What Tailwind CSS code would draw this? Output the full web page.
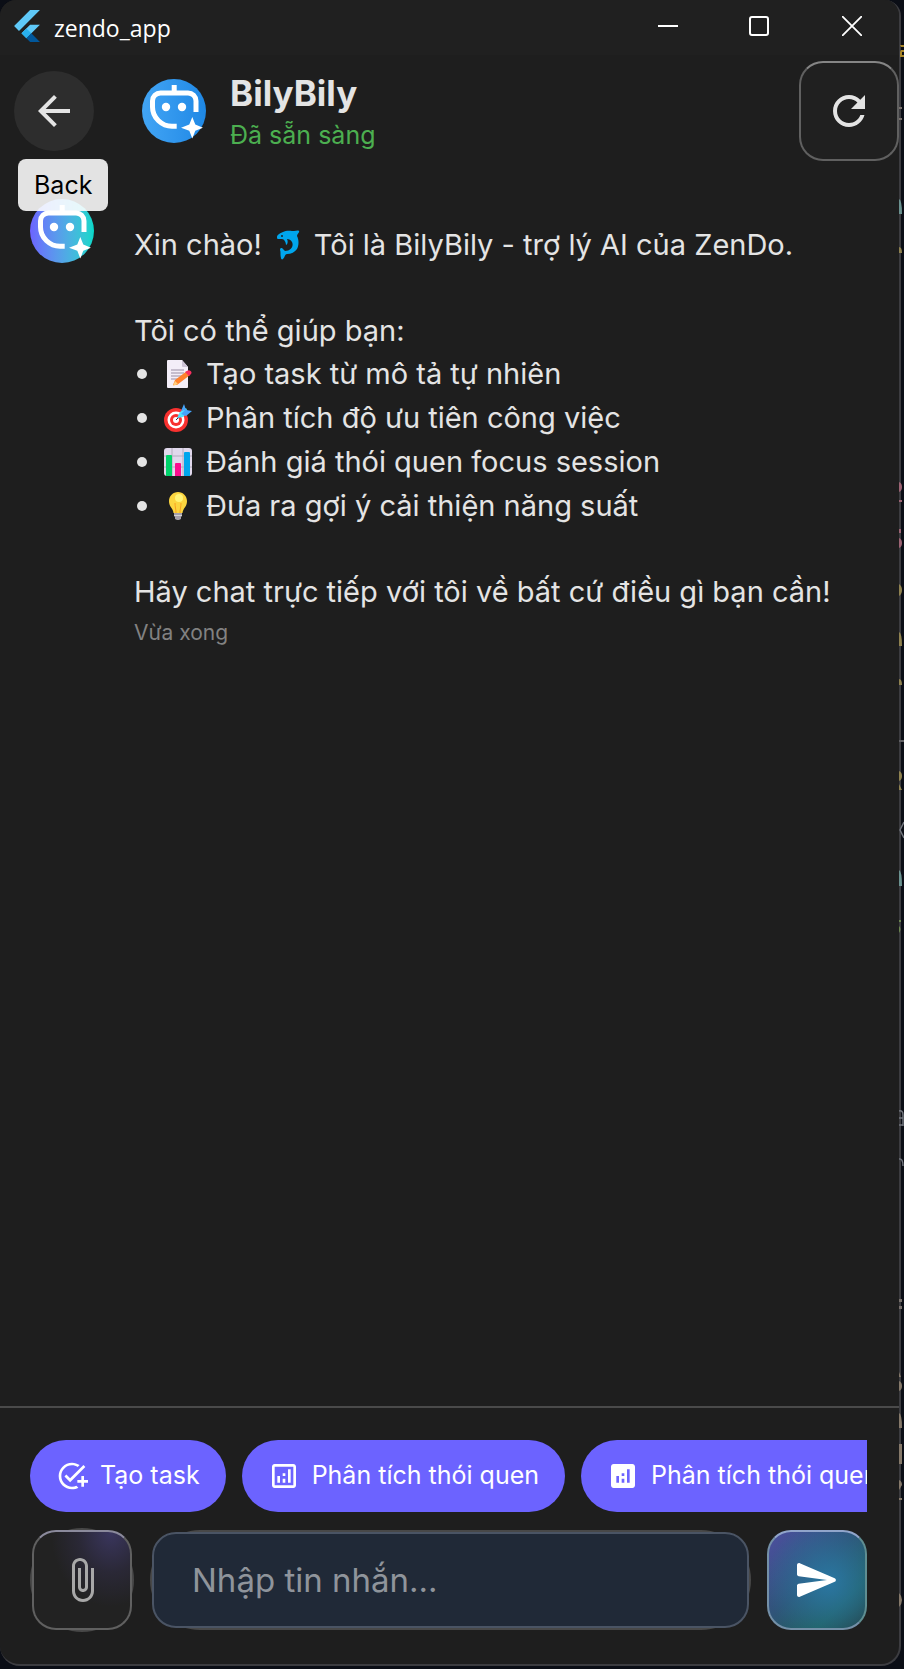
<!DOCTYPE html>
<html lang="vi">
<head>
<meta charset="utf-8">
<meta name="viewport" content="width=device-width, initial-scale=1">
<title>zendo_app</title>
<script src="https://cdn.jsdelivr.net/npm/@tailwindcss/browser@4"></script>
</head>
<body class="bg-[#0b0e16] font-['Inter',sans-serif] text-[#e4e4e4]">
<svg class="hidden" aria-hidden="true">
  <symbol id="bot" viewBox="0 0 64 64">
    <path d="M54 33V22a8 8 0 0 0-8-8H18.500a8 8 0 0 0-8 8v6C10.500 39 20 47.300 30 47.300h4.700M32.200 6v8" fill="none" stroke="#fff" stroke-width="5"/>
    <circle cx="24" cy="28" r="4.200" fill="#fff"/><circle cx="40" cy="28" r="4.200" fill="#fff"/>
    <path d="M50.300 38l3 7.600 7.700 3.100-7.700 3.100-3 7.600-3-7.600-8.300-3.100 8.300-3.100z" fill="#fff"/>
  </symbol>
</svg>

<div class="relative h-screen overflow-hidden pr-[3px] pb-[3px]">
  <div class="flex h-full flex-col overflow-hidden rounded-t-2xl rounded-b-[20px] border-r-2 border-b-2 border-[#3c3c40] bg-[#1e1e1e]">

    <!-- Title bar -->
    <header class="flex h-[55px] shrink-0 items-start bg-[#202020] pl-[11px]">
      <svg class="mt-2.5 mr-[11px] size-8" viewBox="0 0 24 24" aria-hidden="true">
        <path fill="#5fc9f8" d="M14.314 0L2.300 12 6 15.700 21.684.013zM14.328 11.072L7.857 17.530l3.700 3.700L21.700 11.072z"/>
        <path fill="#29b0ee" d="M7.857 17.530l3.690-3.690 3.690 3.690-3.690 3.700z"/>
        <path fill="#01579b" d="M11.547 21.220l3.690-3.690L21.700 24h-7.372z"/>
      </svg>
      <h1 class="mt-3 grow font-['Open_Sans',sans-serif] text-[23px] leading-8 text-white">zendo_app</h1>
      <div class="flex text-white">
        <button class="grid h-[52px] w-[91px] place-items-center" aria-label="Minimize"><svg class="size-5" viewBox="0 0 20 20"><path d="M0 10h20" stroke="currentColor" stroke-width="2"/></svg></button>
        <button class="grid h-[52px] w-[91px] place-items-center" aria-label="Maximize"><svg class="size-5" viewBox="0 0 20 20"><rect x="1" y="1" width="18" height="18" rx="2" fill="none" stroke="currentColor" stroke-width="2"/></svg></button>
        <button class="grid h-[52px] w-[95px] place-items-center" aria-label="Close"><svg class="size-5" viewBox="0 0 20 20"><path d="M0 0l20 20M20 0L0 20" stroke="currentColor" stroke-width="1.800"/></svg></button>
      </div>
    </header>

    <!-- App bar -->
    <section class="flex h-28 shrink-0 items-center pl-3.5">
      <div class="relative">
        <button class="grid size-20 place-items-center rounded-full bg-[#2d2d2d]" aria-label="Back" aria-describedby="back-tip">
          <svg class="size-12" viewBox="0 0 24 24" fill="currentColor"><path d="M20 11H7.830l5.590-5.590L12 4l-8 8 8 8 1.410-1.410L7.830 13H20v-2z"/></svg>
        </button>
        <span id="back-tip" role="tooltip" class="absolute top-[88px] left-1 z-10 rounded-lg bg-white/88 px-4 py-2.5 text-[25px] leading-8 text-black">Back</span>
      </div>
      <div class="ml-12 size-16 rounded-full bg-linear-to-r from-[#42a5f5] to-[#1e88e5]"><svg class="size-16" aria-hidden="true"><use href="#bot"/></svg></div>
      <div class="ml-6 grow pt-1">
        <h2 class="text-[35px] leading-11 font-bold">BilyBily</h2>
        <p class="text-[25px] leading-10 text-[#4caf50]">Đã sẵn sàng</p>
      </div>
      <button class="grid size-25 place-items-center rounded-3xl border-2 border-[#606060] border-t-[#858585] bg-[#202020]" aria-label="Refresh">
        <svg class="size-12" viewBox="0 0 24 24" fill="currentColor"><path d="M17.650 6.350C16.200 4.900 14.210 4 12 4c-4.420 0-7.990 3.580-7.990 8s3.570 8 7.990 8c3.730 0 6.840-2.550 7.730-6h-2.080c-.82 2.330-3.040 4-5.650 4-3.310 0-6-2.690-6-6s2.690-6 6-6c1.660 0 3.140.69 4.220 1.780L13 11h7V4l-2.350 2.350z"/></svg>
      </button>
    </section>

    <!-- Conversation -->
    <main class="flex grow items-start px-[30px] pt-8">
      <div class="size-16 shrink-0 rounded-full bg-linear-to-r from-[#6c63ff] to-[#00d9c9]"><svg class="size-16" aria-hidden="true"><use href="#bot"/></svg></div>
      <article class="ml-10 grow pt-6 text-[29px] leading-[43px]">
        <p class="flex items-center whitespace-pre">Xin chào!<svg class="mx-2.5 size-8" viewBox="0 0 32 32" role="img" aria-label="dolphin"><path fill="#00a6ed" d="M5 8C5 6 8 4 11 3c3-2 9-1 11-1 2 0 4-1 5 0 1 1-2 3-2 5 2 4 2 9 0 13-2 3-6 5-10 5-2 0-2 3-4 5-1 1-2 0-2-1-1-3 0-6-1-8 0-2 1-2 2-2l3 3c6 0 9-5 7-9-1-2-3-3-5-3 1 2 1 5-1 6 0-3-2-6-4-6H6C5 10 5 9 5 8z"/><circle cx="10" cy="7" r="1" fill="#212121"/></svg>Tôi là BilyBily - trợ lý AI của ZenDo.</p>
        <p class="mt-[43px]">Tôi có thể giúp bạn:</p>
        <ul class="leading-11">
          <li class="flex items-center"><span class="mx-[3px] size-2.5 shrink-0 rounded-full bg-current"></span><svg class="mr-3.5 ml-3.5 size-7" viewBox="0 0 28 28" role="img" aria-label="memo"><path fill="#f3eef8" d="M3 1a1 1 0 0 1 1-1h14l6 7v20a1 1 0 0 1-1 1H4a1 1 0 0 1-1-1z"/><path fill="#cdc4d6" d="M18 0l6 7h-5a1 1 0 0 1-1-1z"/><path d="M7 10h13M7 13h13M7 16h12M7 19h8" stroke="#998ea4"/><path fill="#ff822d" d="M9 25l2-5L23 11l3 4-13 10z"/><path fill="#ffce7c" d="M9 26l2-5 3 3z"/><path fill="#f92f60" d="M23 11c2-2 6 1 4 3l-2 2-4-4z"/></svg>Tạo task từ mô tả tự nhiên</li>
          <li class="flex items-center"><span class="mx-[3px] size-2.5 shrink-0 rounded-full bg-current"></span><svg class="mr-3.5 ml-3.5 size-7" viewBox="0 0 28 28" role="img" aria-label="target"><circle cx="12" cy="16" r="12" fill="#f8312f"/><circle cx="12" cy="16" r="8.500" fill="#fff"/><circle cx="12" cy="16" r="6" fill="#f8312f"/><circle cx="12" cy="16" r="3" fill="#fff"/><path d="M12 16l8-8" stroke="#212f50"/><path fill="#50e2ff" d="M13 14l3-6 6-4 2 4-5 5z"/><path fill="#46a4fb" d="M17 7l3-7 2 6 6 1-6 5-5-2 4-4z"/></svg>Phân tích độ ưu tiên công việc</li>
          <li class="flex items-center"><span class="mx-[3px] size-2.5 shrink-0 rounded-full bg-current"></span><svg class="mr-3.5 ml-3.5 size-7" viewBox="0 0 28 28" role="img" aria-label="bar chart"><rect width="28" height="28" rx="3" fill="#e1d8ec"/><path d="M0 8h28M0 19h28M8 0v28M19 0v28" stroke="#b4acbc"/><path fill="#00d26a" d="M2 8a1 1 0 0 1 1-1h4a1 1 0 0 1 1 1v20H2z"/><path fill="#fc0c8f" d="M11 16a1 1 0 0 1 1-1h4a1 1 0 0 1 1 1v12h-6z"/><path fill="#00a6ed" d="M20 5a1 1 0 0 1 1-1h4a1 1 0 0 1 1 1v23h-6z"/></svg>Đánh giá thói quen focus session</li>
          <li class="flex items-center"><span class="mx-[3px] size-2.5 shrink-0 rounded-full bg-current"></span><svg class="mr-3.5 ml-3.5 size-7" viewBox="0 0 28 28" role="img" aria-label="light bulb"><path fill="#fcd53f" d="M14 0c5 0 9 4 9 9 0 6-4 7-4.500 12h-9C9 16 5 15 5 9c0-5 4-9 9-9z"/><circle cx="15" cy="6" r="4" fill="#fff478"/><path d="M11 11c0 4 1 6 1 10M17 11c0 4-1 6-1 10" fill="none" stroke="#f9a01f"/><path fill="#a5a0aa" d="M10 21h8v3l-1 1v2l-2 1h-2l-2-1v-2l-1-1z"/><path d="M10 23.500h8" stroke="#d3d3d3"/></svg>Đưa ra gợi ý cải thiện năng suất</li>
        </ul>
        <p class="mt-[42px]">Hãy chat trực tiếp với tôi về bất cứ điều gì bạn cần!</p>
        <time class="block text-[21px] leading-10 text-[#828282]">Vừa xong</time>
      </article>
    </main>

    <!-- Composer -->
    <footer class="shrink-0 border-t-2 border-[#4a4a4a] px-[30px] pt-8 pb-8">
      <div class="mr-0.5 flex gap-4 overflow-hidden text-[25px] text-white">
        <button class="flex h-18 shrink-0 items-center gap-3 rounded-full bg-[#6c63ff] px-[26px]"><svg class="size-8" viewBox="0 0 24 24" fill="currentColor"><path d="M22 5.180L10.590 16.600l-4.240-4.240 1.410-1.410 2.830 2.830 10-10L22 5.180zM12 20c-4.410 0-8-3.590-8-8s3.590-8 8-8c1.570 0 3.040.46 4.280 1.250l1.450-1.450C16.100 2.670 14.130 2 12 2 6.480 2 2 6.480 2 12s4.480 10 10 10c1.730 0 3.360-.44 4.780-1.220l-1.500-1.500c-1 .46-2.110.72-3.280.72zm7-5h-3v2h3v3h2v-3h3v-2h-3v-3h-2v3z"/></svg>Tạo task</button>
        <button class="flex h-18 shrink-0 items-center gap-3 rounded-full bg-[#6c63ff] px-[26px]"><svg class="size-8" viewBox="0 0 24 24" fill="currentColor"><path d="M19 3H5c-1.100 0-2 .9-2 2v14c0 1.100.9 2 2 2h14c1.100 0 2-.9 2-2V5c0-1.100-.9-2-2-2zm0 16H5V5h14v14zM7 12h2v5H7zM15 7h2v10h-2zM11 14h2v3h-2zM11 10h2v2h-2z"/></svg>Phân tích thói quen</button>
        <button class="flex h-18 shrink-0 items-center gap-3 rounded-full bg-[#6c63ff] px-[26px]"><svg class="size-8" viewBox="0 0 24 24" fill="currentColor"><path d="M19 3H5c-1.100 0-2 .9-2 2v14c0 1.100.9 2 2 2h14c1.100 0 2-.9 2-2V5c0-1.100-.9-2-2-2zM9 17H7v-5h2v5zm4 0h-2v-3h2v3zm0-5h-2v-2h2v2zm4 5h-2V7h2v10z"/></svg>Phân tích thói quen</button>
      </div>
      <div class="mt-4 mr-0.5 flex items-center gap-4">
        <div class="shrink-0 rounded-full bg-[#484848] p-0.5">
          <button class="grid size-25 place-items-center rounded-3xl border-2 border-[#606060] border-t-[#8b8a9c] bg-[#222222] bg-[radial-gradient(ellipse_at_80%_0%,#3a365e_0%,#2a2836_30%,transparent_55%)] text-[#a8a8a8]" aria-label="Attach file">
            <svg class="size-12" viewBox="0 0 24 24" fill="currentColor"><path d="M16.500 6v11.500c0 2.210-1.790 4-4 4s-4-1.790-4-4V5c0-1.380 1.120-2.500 2.500-2.500s2.500 1.120 2.500 2.500v10.500c0 .55-.45 1-1 1s-1-.45-1-1V6H10v9.500c0 1.380 1.120 2.500 2.500 2.500s2.500-1.120 2.500-2.500V5c0-2.210-1.790-4-4-4S7 2.790 7 5v12.500c0 3.040 2.460 5.500 5.500 5.500s5.500-2.460 5.500-5.500V6h-1.500z"/></svg>
          </button>
        </div>
        <div class="min-w-0 grow rounded-full bg-[#484848] p-0.5">
          <input type="text" aria-label="Nhập tin nhắn" placeholder="Nhập tin nhắn..." class="block h-24 w-full rounded-3xl border-2 border-[#4a5464] bg-[#202937] px-[38px] text-[33px] outline-none placeholder:text-[#8f949b]">
        </div>
        <button class="grid size-25 shrink-0 place-items-center rounded-3xl border-2 border-[#7490a8] border-t-[#91a5cb] border-r-[#5f8e92] bg-[radial-gradient(circle_at_62%_52%,#2a77a2_0%,#2b729b80_45%,transparent_80%),linear-gradient(135deg,#4d4fa0_0%,#2f5478_45%,#20625f_75%,#24414a_100%)] text-white" aria-label="Send">
          <svg class="size-12" viewBox="0 0 24 24" fill="currentColor"><path d="M3.400 20.400l17.450-7.480c.81-.35.81-1.490 0-1.840L3.400 3.600c-.66-.29-1.390.2-1.390.91L2 9.120c0 .5.37.93.87.99L17 12 2.870 13.880c-.5.07-.87.5-.87 1l.01 4.610c0 .71.73 1.200 1.390.91z"/></svg>
        </button>
      </div>
    </footer>
  </div>

  <!-- Glints of the desktop behind the window's translucent right edge -->
  <svg class="absolute top-0 right-0 h-[1669px] w-[5px]" viewBox="0 0 5 1669" aria-hidden="true">
    <g fill="#8f8250">
      <path d="M0 247q3 0 3 6H0zM0 584q3 2 3 6t-3 6zM0 632q3 1 3 14H0zM0 679q3 0 3 6H0zM0 771q3 1 3 5t-3 5zM0 784l3 6H0z"/>
      <path fill="#a8862a" d="M1 45h4v2H2zM2 50h3v2H3v3h2v2H1v-5z"/>
      <path fill="#77706c" d="M0 107h3v2H0zM0 118h3v2H0zM0 1299h3v3H0zM0 1306h3v3H0z"/>
      <path fill="#6b9290" d="M0 199q3 1 3 15H0zM0 870q3 1 3 16H0z"/>
      <path fill="#9c6474" d="M0 482q3 1 3 5t-3 5zM0 500h3v2H0zM0 529h2v4H0zM0 538q3 1 3 5t-3 5z"/>
      <path fill="#606064" d="M0 740h5v2H0z"/>
      <path fill="#6c8650" d="M0 920h2v2H0zM0 926q3 3 0 7z"/>
      <path fill="#85796a" d="M0 1372l2 5H0zM0 1381q3 1 3 5t-3 5zM0 1413q3 1 3 15H0zM0 1444h3v20H0zM0 1480q3 1 3 5l-3 5zM0 1498h3v2H0zM0 1593q3 3 3 7t-3 7z"/>
    </g>
    <g fill="none" stroke="#70747c" stroke-width="1.500">
      <path d="M5 822l-4 8 4 8M0 1111q4-1 4 4v11M0 1118h4M0 1125h4M0 1159q4-1 4 7"/>
    </g>
  </svg>
</div>
</body>
</html>
